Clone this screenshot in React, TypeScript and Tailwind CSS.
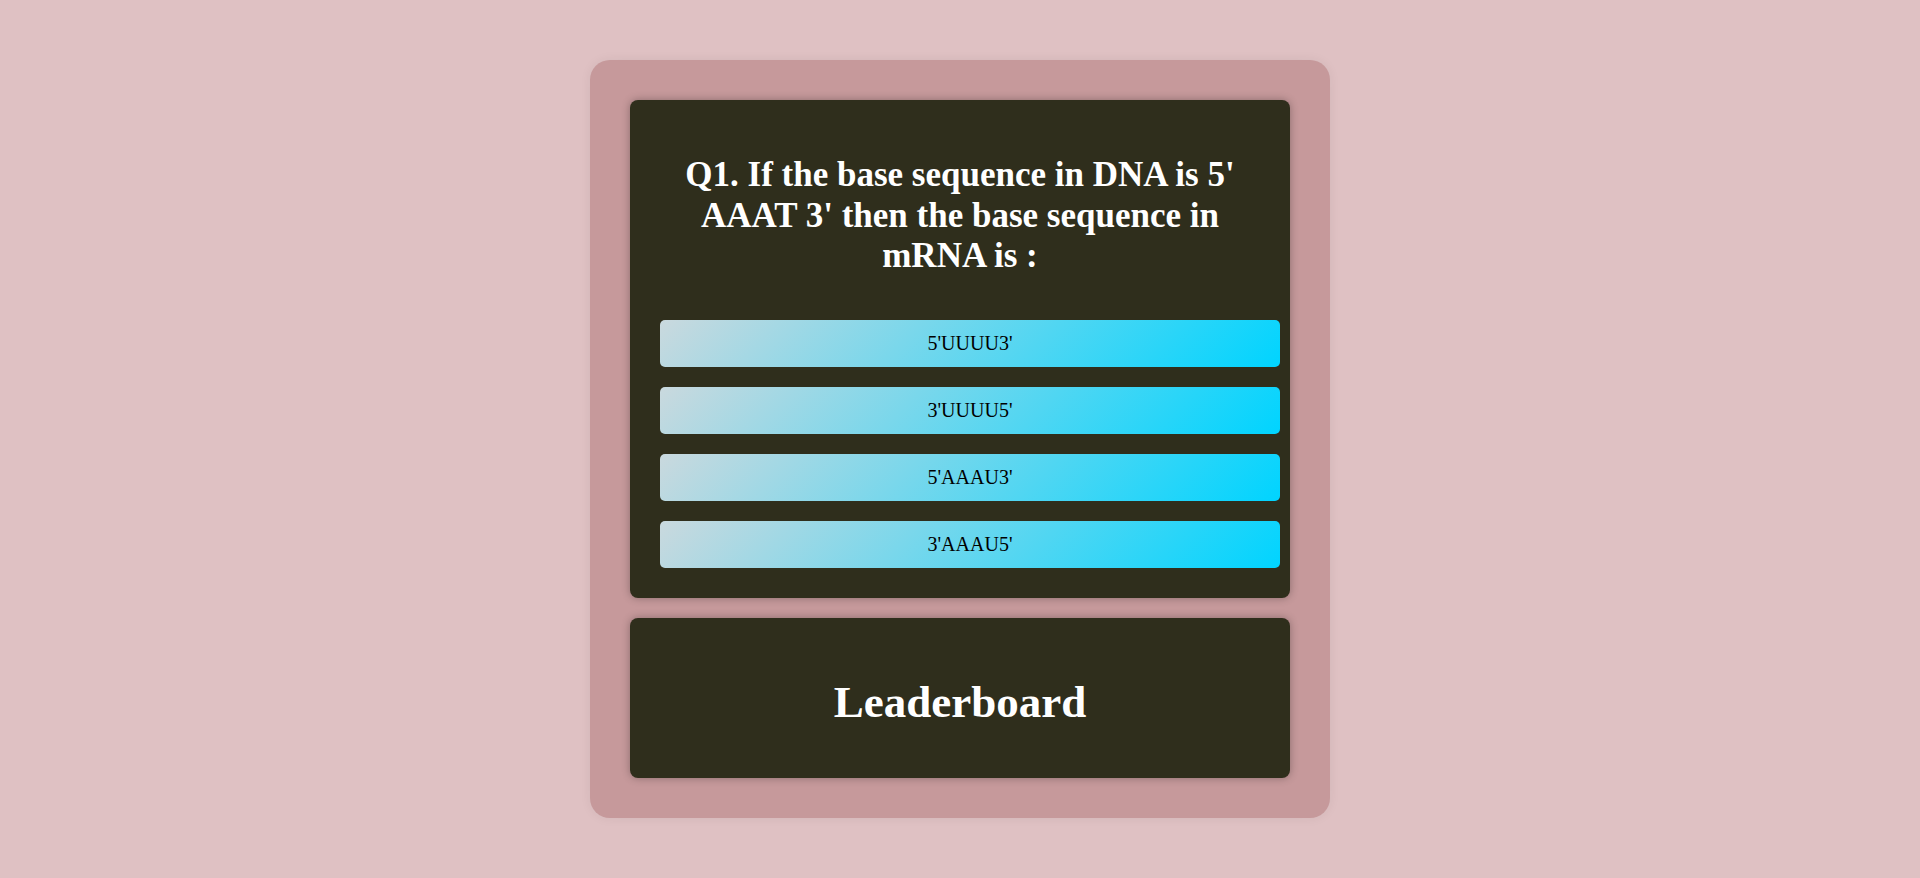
const options = ["5'UUUU3'", "3'UUUU5'", "5'AAAU3'", "3'AAAU5'"];

const serif = { fontFamily: '"Liberation Serif", "Times New Roman", serif' };

const App = () => {
  return (
    <div className="min-h-screen bg-[#dfc1c3] flex justify-center py-[60px]" style={serif}>
      <div className="w-[740px] bg-[#c6999b] rounded-[20px] p-10 flex flex-col gap-5 shadow-[0_0_12px_rgba(0,0,0,0.06)]">
        {/* Question Card */}
        <div className="bg-[#2f2e1c] rounded-lg pl-[30px] pr-[10px] pt-[55px] pb-[30px] shadow-[0_0_8px_rgba(0,0,0,0.3)]">
          <h2 className="text-white text-[35px] font-bold leading-[40.5px] text-center w-[600px] mb-[43px]">
            Q1. If the base sequence in DNA is 5' AAAT 3' then the base sequence in mRNA is :
          </h2>
          <div className="flex flex-col gap-5">
            {options.map((opt) => (
              <button
                key={opt}
                className="h-[47px] w-full rounded-[5px] text-black text-[20px] bg-[linear-gradient(135deg,#cad9de_0%,#00d4ff_100%)]"
              >
                {opt}
              </button>
            ))}
          </div>
        </div>

        {/* Leaderboard */}
        <div className="bg-[#2f2e1c] rounded-lg h-[160px] flex items-center justify-center shadow-[0_0_8px_rgba(0,0,0,0.3)]">
          <h1 className="text-white text-[45px] font-bold leading-none mt-[10px]">Leaderboard</h1>
        </div>
      </div>
    </div>
  );
};

export default App;
